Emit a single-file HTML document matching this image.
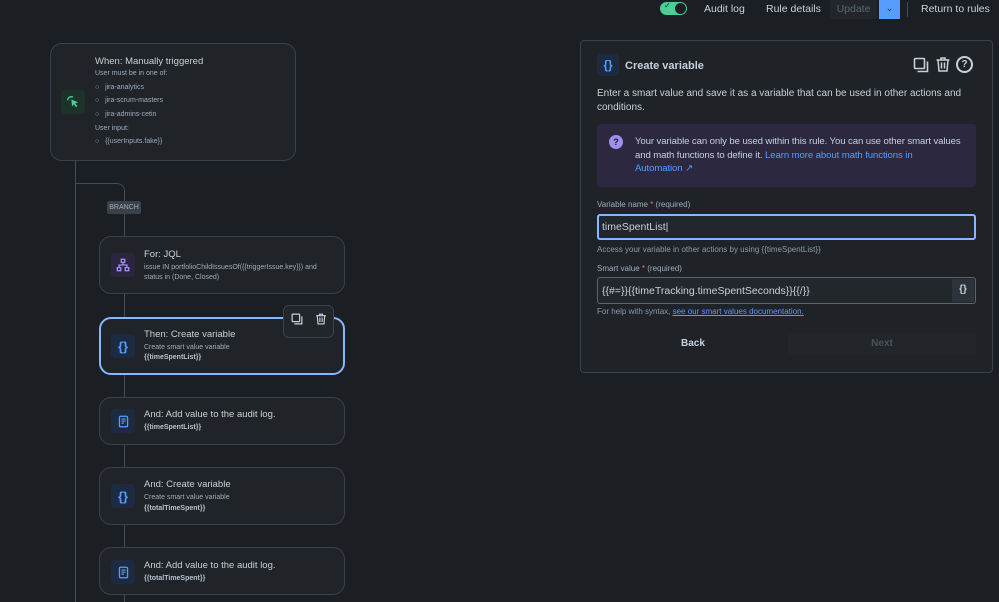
<!DOCTYPE html>
<html><head><meta charset="utf-8"><style>
*{box-sizing:border-box;margin:0;padding:0}
body{width:999px;height:602px;overflow:hidden;background:#1b1e22;font-family:"Liberation Sans",sans-serif;color:#b6c2cf;position:relative}
.abs{position:absolute}
.card{position:absolute;background:#202327;border:1px solid #3b4148;border-radius:12px}
.ib{position:absolute;width:24px;height:24px;border-radius:4px;display:flex;align-items:center;justify-content:center}
.blue{background:#1c2b41;color:#579dff;font-weight:bold;font-size:13px}
.t{position:absolute;font-size:9.5px;color:#c7d1db;white-space:nowrap}
.s{position:absolute;font-size:7px;color:#9fadbc;white-space:nowrap}
.b{font-weight:bold;color:#b6c2cf}
.line{position:absolute;background:#454b52}
</style></head><body>
<svg width="0" height="0" style="position:absolute"><defs>
<symbol id="copy" viewBox="0 0 16 16"><rect x="1.5" y="1.5" width="10" height="10" rx="1" fill="none" stroke="currentColor" stroke-width="1.6"/><path d="M4.5 14.5h10v-10" fill="none" stroke="currentColor" stroke-width="1.6"/></symbol>
<symbol id="trash" viewBox="0 0 16 16"><path d="M1.5 3.5h13M6 3.5V1.5h4v2M3 3.5l1 11h8l1-11M6.5 6v6M9.5 6v6" fill="none" stroke="currentColor" stroke-width="1.5"/></symbol>
<symbol id="doc" viewBox="0 0 16 16"><rect x="3" y="1.5" width="10" height="13" rx="1.5" fill="none" stroke="currentColor" stroke-width="1.6"/><path d="M5.5 5h5M5.5 7.5h5M5.5 10h3" stroke="currentColor" stroke-width="1.4"/></symbol>
</defs></svg>
<!-- top bar -->
<div class="abs" style="left:660px;top:2px;width:27px;height:13px;border-radius:7px;background:#4bce97"></div>
<div class="abs" style="left:675px;top:3px;width:11px;height:11px;border-radius:50%;background:#1b1e22"></div>
<div class="abs" style="left:664px;top:1px;font-size:8px;color:#1b1e22">✓</div>
<div class="abs" style="left:704px;top:3px;font-size:10.5px;color:#c7d1db">Audit log</div>
<div class="abs" style="left:766px;top:3px;font-size:10.5px;color:#c7d1db">Rule details</div>
<div class="abs" style="left:830px;top:0;width:47px;height:19px;background:#22262a;color:#5d6670;font-size:10.5px;text-align:center;line-height:19px">Update</div>
<div class="abs" style="left:879px;top:0;width:21px;height:19px;background:#579dff;color:#1b1e22;font-size:9px;text-align:center;line-height:17px">⌄</div>
<div class="abs" style="left:907px;top:2px;width:1px;height:15px;background:#454b52"></div>
<div class="abs" style="left:921px;top:3px;font-size:10.5px;color:#c7d1db">Return to rules</div>

<!-- lines -->
<div class="line" style="left:75px;top:160px;width:1px;height:442px"></div>
<div class="abs" style="left:75px;top:183px;width:50px;height:30px;border-top:1px solid #454b52;border-right:1px solid #454b52;border-top-right-radius:8px"></div>
<div class="line" style="left:124px;top:213px;width:1px;height:389px"></div>
<div class="abs" style="left:107px;top:201px;width:34px;height:13px;background:#3b4148;border-radius:2px;font-size:7px;color:#9fadbc;text-align:center;line-height:13px">BRANCH</div>

<!-- trigger -->
<div class="card" style="left:50px;top:43px;width:246px;height:118px"></div>
<div class="ib" style="left:61px;top:90px;background:#1c3329;color:#4bce97"><svg width="14" height="14" viewBox="0 0 16 16"><path d="M6 5l8 3.5-3.5 1 2.5 3.5-1.5 1-2.5-3.5-2 2.5z" fill="#4bce97"/><path d="M2 6a4 4 0 0 1 6-3.5" fill="none" stroke="#4bce97" stroke-width="1.5"/></svg></div>
<div class="t" style="left:95px;top:56px">When: Manually triggered</div>
<div class="s" style="left:95px;top:70px">User must be in one of:</div>
<div class="s" style="left:95px;top:84px">○&nbsp;&nbsp;&nbsp;jira-analytics</div>
<div class="s" style="left:95px;top:97px">○&nbsp;&nbsp;&nbsp;jira-scrum-masters</div>
<div class="s" style="left:95px;top:111px">○&nbsp;&nbsp;&nbsp;jira-admins-cetin</div>
<div class="s" style="left:95px;top:125px">User input:</div>
<div class="s" style="left:95px;top:138px">○&nbsp;&nbsp;&nbsp;{{userInputs.fake}}</div>

<!-- JQL -->
<div class="card" style="left:99px;top:236px;width:246px;height:58px"></div>
<div class="ib" style="left:111px;top:253px;background:#2b2540"><svg width="14" height="14" viewBox="0 0 16 16" fill="none" stroke="#9f8fef" stroke-width="1.5"><rect x="6" y="1.5" width="4" height="3.5"/><rect x="1.5" y="11" width="4" height="3.5"/><rect x="10.5" y="11" width="4" height="3.5"/><path d="M8 5v3M3.5 11V8h9v3"/></svg></div>
<div class="t" style="left:144px;top:249px">For: JQL</div>
<div class="s" style="left:144px;top:264px">issue IN portfolioChildIssuesOf({{triggerIssue.key}}) and</div>
<div class="s" style="left:144px;top:274px">status in (Done, Closed)</div>

<!-- Then -->
<div class="card" style="left:99px;top:317px;width:246px;height:58px;border:2px solid #85b8ff"></div>
<div class="ib blue" style="left:111px;top:334px">{}</div>
<div class="t" style="left:144px;top:329px">Then: Create variable</div>
<div class="s" style="left:144px;top:344px">Create smart value variable</div>
<div class="s b" style="left:144px;top:354px">{{timeSpentList}}</div>
<div class="abs" style="left:283px;top:305px;width:51px;height:33px;background:#22262a;border:1px solid #3b4148;border-radius:6px;color:#c7d1db"></div>
<svg class="abs" style="left:291px;top:313px;color:#c7d1db" width="12" height="12"><use href="#copy"/></svg>
<svg class="abs" style="left:315px;top:313px;color:#c7d1db" width="12" height="12"><use href="#trash"/></svg>

<!-- And 1 -->
<div class="card" style="left:99px;top:397px;width:246px;height:48px"></div>
<div class="ib blue" style="left:111px;top:409px"><svg width="13" height="13" style="color:#579dff"><use href="#doc"/></svg></div>
<div class="t" style="left:144px;top:409px">And: Add value to the audit log.</div>
<div class="s b" style="left:144px;top:424px">{{timeSpentList}}</div>
<!-- And 2 -->
<div class="card" style="left:99px;top:467px;width:246px;height:58px"></div>
<div class="ib blue" style="left:111px;top:484px">{}</div>
<div class="t" style="left:144px;top:479px">And: Create variable</div>
<div class="s" style="left:144px;top:494px">Create smart value variable</div>
<div class="s b" style="left:144px;top:505px">{{totalTimeSpent}}</div>
<!-- And 3 -->
<div class="card" style="left:99px;top:547px;width:246px;height:48px"></div>
<div class="ib blue" style="left:111px;top:560px"><svg width="13" height="13" style="color:#579dff"><use href="#doc"/></svg></div>
<div class="t" style="left:144px;top:560px">And: Add value to the audit log.</div>
<div class="s b" style="left:144px;top:575px">{{totalTimeSpent}}</div>

<!-- right panel -->
<div class="abs" style="left:580px;top:40px;width:413px;height:333px;background:#1f2226;border:1px solid #3b4148;border-radius:4px"></div>
<div class="ib blue" style="left:597px;top:54px;width:22px;height:22px;font-size:12px">{}</div>
<div class="abs" style="left:625px;top:60px;font-size:11px;font-weight:bold;color:#c7d1db">Create variable</div>
<svg class="abs" style="left:913px;top:57px;color:#c7d1db" width="16" height="16"><use href="#copy"/></svg>
<svg class="abs" style="left:935px;top:56px;color:#c7d1db" width="16" height="17"><use href="#trash"/></svg>
<div class="abs" style="left:956px;top:56px;width:17px;height:17px;border:2px solid #c7d1db;border-radius:50%;font-size:10px;font-weight:bold;text-align:center;line-height:13px;color:#c7d1db">?</div>
<div class="abs" style="left:597px;top:87px;width:375px;font-size:10px;line-height:14px;color:#c7d1db">Enter a smart value and save it as a variable that can be used in other actions and conditions.</div>
<div class="abs" style="left:597px;top:124px;width:379px;height:63px;background:#2b2840;border-radius:3px"></div>
<div class="abs" style="left:609px;top:135px;width:14px;height:14px;border-radius:50%;background:#9f8fef;color:#1b1e22;font-size:9px;font-weight:bold;text-align:center;line-height:14px">?</div>
<div class="abs" style="left:635px;top:135px;width:340px;font-size:9.6px;letter-spacing:-0.1px;line-height:13.7px;color:#c7d1db;white-space:nowrap">Your variable can only be used within this rule. You can use other smart values<br>and math functions to define it. <span style="color:#579dff">Learn more about math functions in<br>Automation ↗</span></div>
<div class="abs" style="left:597px;top:200px;font-size:8px;color:#9fadbc">Variable name <span style="color:#f87168">*</span> (required)</div>
<div class="abs" style="left:597px;top:214px;width:379px;height:26px;border:2px solid #85b8ff;border-radius:3px;background:#22272b;font-size:10.5px;color:#c7d1db;padding:5px 3px">timeSpentList|</div>
<div class="abs" style="left:597px;top:245px;font-size:8px;color:#8c9bab">Access your variable in other actions by using {{timeSpentList}}</div>
<div class="abs" style="left:597px;top:264px;font-size:8px;color:#9fadbc">Smart value <span style="color:#f87168">*</span> (required)</div>
<div class="abs" style="left:597px;top:277px;width:379px;height:27px;border:1px solid #5b636c;border-radius:3px;background:#22272b;font-size:10.5px;color:#c7d1db;padding:7px 4px">{{#=}}{{timeTracking.timeSpentSeconds}}{{/}}</div>
<div class="abs" style="left:952px;top:279px;width:22px;height:23px;background:#2c333a;color:#c7d1db;font-size:10px;font-weight:bold;text-align:center;line-height:22px">{}</div>
<div class="abs" style="left:597px;top:307px;font-size:8px;color:#8c9bab">For help with syntax, <span style="color:#579dff;text-decoration:underline">see our smart values documentation.</span></div>
<div class="abs" style="left:681px;top:338px;font-size:10px;font-weight:bold;color:#c7d1db">Back</div>
<div class="abs" style="left:788px;top:333px;width:188px;height:22px;background:#22262a;border-radius:3px;font-size:10px;font-weight:bold;color:#4a525a;text-align:center;line-height:22px">Next</div>
</body></html>
